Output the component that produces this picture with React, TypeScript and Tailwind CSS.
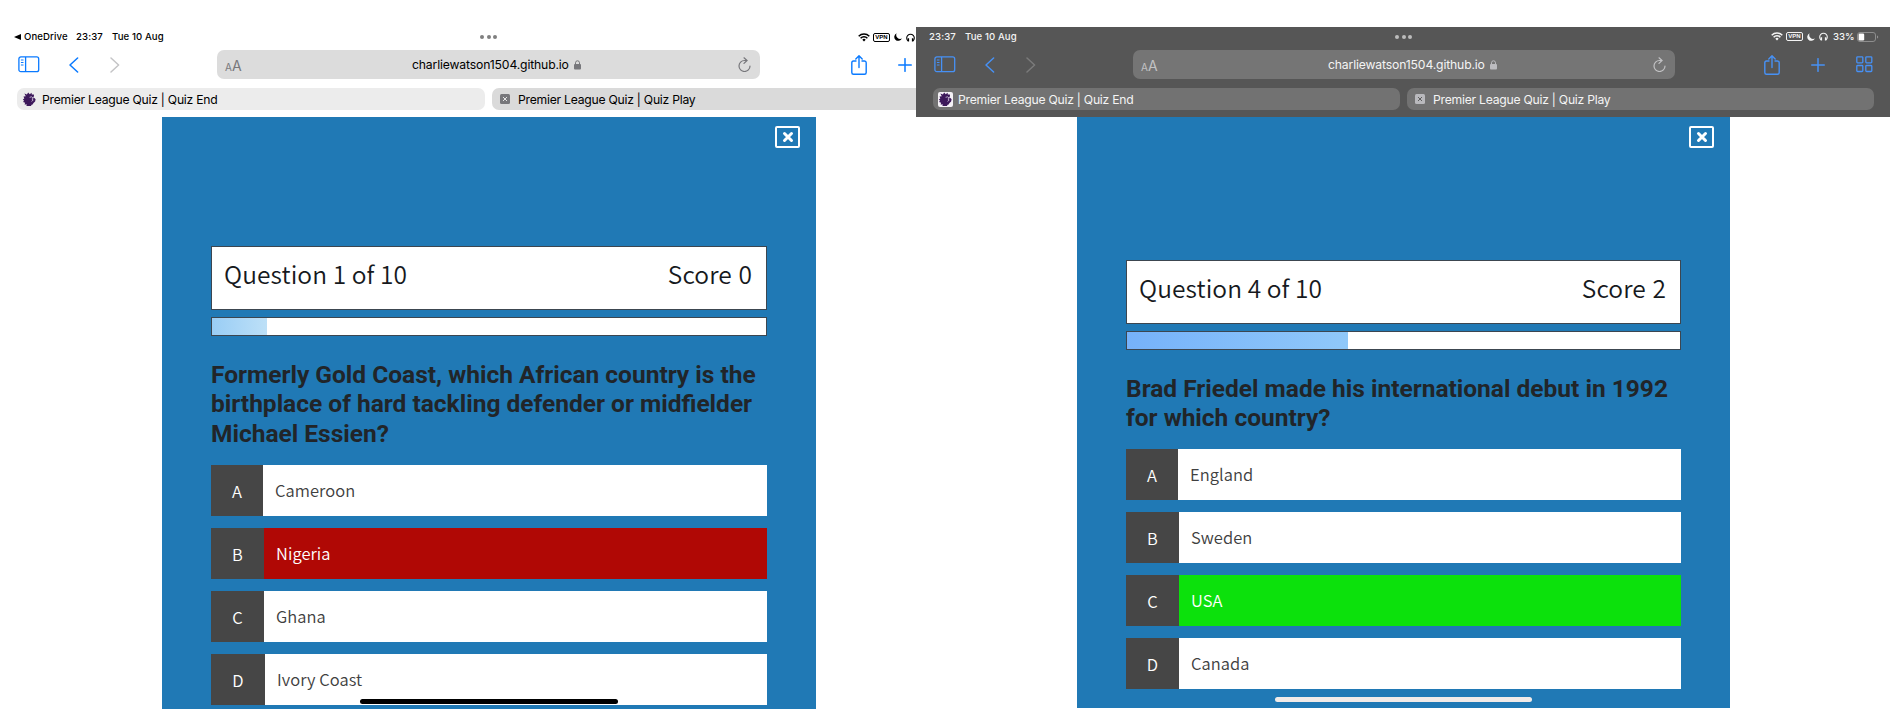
import { ReactNode } from "react";

const UI = "font-['Inter',sans-serif]";
const READ = "font-['Noto_Sans_CJK_SC',sans-serif] font-[350]";

function SidebarIcon() {
  return (
    <svg width="22" height="17" viewBox="0 0 22 17" fill="none" stroke="currentColor" strokeWidth="1.3">
      <rect x="0.9" y="0.9" width="19.8" height="14.8" rx="2" />
      <path d="M7.6 1v14.6" />
      <path d="M2.9 4h2.6M2.9 6.5h2.6M2.9 9h2.6" strokeWidth="1" />
    </svg>
  );
}

function Chevron({ flip = false }: { flip?: boolean }) {
  return (
    <svg width="10" height="16" viewBox="0 0 10 16" fill="none" stroke="currentColor" strokeWidth="1.5" strokeLinecap="round" strokeLinejoin="round">
      <path d={flip ? "M1 1l7.6 7L1 15" : "M8.6 1L1 8l7.6 7"} />
    </svg>
  );
}

function ShareIcon() {
  return (
    <svg width="16" height="20" viewBox="0 0 16 20" fill="none" stroke="currentColor" strokeWidth="1.4" strokeLinecap="round" strokeLinejoin="round">
      <path d="M5 6H2.5Q.8 6 .8 7.8v9.6q0 1.8 1.7 1.8h11q1.7 0 1.7-1.8V7.8Q15.2 6 13.5 6H11" />
      <path d="M8 12.5V1M4.800 4L8 .8 11.2 4" />
    </svg>
  );
}

function PlusIcon() {
  return (
    <svg width="14" height="14" viewBox="0 0 14 14" stroke="currentColor" strokeWidth="1.5" strokeLinecap="round">
      <path d="M7 .7v12.6M.7 7h12.6" />
    </svg>
  );
}

function GridIcon() {
  return (
    <svg width="17" height="17" viewBox="0 0 17 17" fill="none" stroke="currentColor" strokeWidth="1.3">
      <rect x="0.8" y="0.8" width="6" height="6" rx="0.8" />
      <rect x="9.8" y="0.8" width="6" height="6" rx="0.8" />
      <rect x="0.8" y="9.5" width="6" height="6" rx="0.8" />
      <rect x="9.8" y="9.5" width="6" height="6" rx="0.8" />
    </svg>
  );
}

function LockIcon() {
  return (
    <svg width="7" height="10" viewBox="0 0 7 10" fill="none">
      <rect x="0" y="4" width="7" height="5.6" rx="1" fill="currentColor" />
      <path d="M1.500 4.500V2.800a2 2 0 0 1 4 0v1.700" stroke="currentColor" strokeWidth="1" />
    </svg>
  );
}

function ReloadIcon() {
  return (
    <svg width="13" height="15" viewBox="0 0 13 15" fill="none" stroke="currentColor" strokeWidth="1.2" strokeLinecap="round" strokeLinejoin="round">
      <path d="M8.8 3.500H6.500a5.500 5.500 0 1 0 5.500 5.500" />
      <path d="M6 .8l3 2.700-3 2.900" />
    </svg>
  );
}

function WifiIcon() {
  return (
    <svg width="12" height="9" viewBox="0 0 12 9" fill="none" stroke="currentColor" strokeWidth="1.5">
      <path d="M.7 3.200a7.500 7.500 0 0 1 10.600 0M2.600 5.200a4.800 4.800 0 0 1 6.800 0" />
      <path d="M6 8.500L4.300 6.700a2.400 2.400 0 0 1 3.400 0z" fill="currentColor" stroke="none" />
    </svg>
  );
}

function MoonIcon() {
  return (
    <svg width="8" height="8" viewBox="0 0 8 8" fill="currentColor">
      <path d="M2.600.2A4 4 0 1 0 7.900 5.500 4 4 0 0 1 2.600.2z" />
    </svg>
  );
}

function HeadphonesIcon() {
  return (
    <svg width="9" height="9" viewBox="0 0 9 9" fill="none" stroke="currentColor">
      <path d="M1.900 7.800A3.800 3.800 0 1 1 7.100 7.800" strokeWidth="1.1" />
      <path d="M2.400 5.300v3.200M6.600 5.300v3.200" strokeWidth="1.4" />
    </svg>
  );
}

function Lion({ boxed = false }: { boxed?: boolean }) {
  return (
    <svg width="15" height="15" viewBox="0 0 15 15">
      {boxed && <rect width="15" height="15" rx="2" fill="#f4f1f6" />}
      <path
        d="M3.800 4.200L2.400 1.600l2.500.9L6.200.6l1.500 1.600L9.600.8l.2 1.800 2.100-.2.100 2-1.500.8 1.900.8 1.200 1.200-.5 2.300-1.600 1.500-.9 1.500-1.500.4.200 1.200H4.300l.7-1.500-2.400-.2.500-1.600-2-.8.900-1.400L.8 7.600l1.500-1L1.500 4.400z"
        fill="#3d195b"
      />
      <path d="M7.600 5.300l2.200-.5 1.400 1.400-1.300.9 1.300 1-1.700 1.300" fill="none" stroke="#b9a9c9" strokeWidth="1" />
    </svg>
  );
}

function TabClose({ dark }: { dark: boolean }) {
  return (
    <svg width="10" height="10" viewBox="0 0 10 10">
      <rect width="10" height="10" rx="1.500" fill={dark ? "#b9b9bd" : "#77777b"} />
      <path d="M3 3l4 4M7 3L3 7" stroke={dark ? "#5c5c5c" : "#e6e6e6"} strokeWidth="1" />
    </svg>
  );
}

function Battery() {
  return (
    <svg width="22" height="10" viewBox="0 0 22 10" fill="none">
      <rect x="0.5" y="0.5" width="18" height="9" rx="2.500" stroke="#8e8e8e" />
      <rect x="1.600" y="1.600" width="5.600" height="6.800" rx="1.200" fill="#fff" />
      <path d="M20.200 3.500v3q1-.4 1-1.500t-1-1.500z" fill="#a0a0a0" />
    </svg>
  );
}

function Browser({ dark, children }: { dark: boolean; children: ReactNode }) {
  const accent = dark ? "text-[#4791f5]" : "text-[#0a7aff]";
  return (
    <section className={dark ? "flex h-[682px] w-[974px] flex-col" : "flex h-[682px] w-[916px] flex-col overflow-hidden"}>
      <header className={`${UI} h-[90px] shrink-0 ${dark ? "bg-[#565656] text-[#f4f4f4]" : "bg-white text-black"}`}>
        <div className="flex h-5 items-center text-[9.6px] font-medium whitespace-nowrap">
          {dark ? (
            <div className="flex w-[479px] gap-[9px] pl-[13px]">
              <span className="w-[27px] tracking-[0.1px]">23:37</span>
              <span className="tracking-[0.1px]">Tue 10 Aug</span>
            </div>
          ) : (
            <div className="flex w-[480px] items-center pl-[14px]">
              <svg width="7" height="6" viewBox="0 0 7 6"><path d="M7 0v6L0 3z" /></svg>
              <span className="ml-[3px] w-[44px] tracking-[0.1px]">OneDrive</span>
              <span className="ml-[8px] w-[27px] tracking-[0.1px]">23:37</span>
              <span className="ml-[9px] tracking-[0.1px]">Tue 10 Aug</span>
            </div>
          )}
          <div className={`flex gap-[2.5px] ${dark ? "text-[#bcbcbc]" : "text-[#7f7f7f]"}`}>
            <i className="size-[4px] rounded-full bg-current" />
            <i className="size-[4px] rounded-full bg-current" />
            <i className="size-[4px] rounded-full bg-current" />
          </div>
          <div className={`ml-auto flex items-center ${dark ? "pr-[11px]" : "pr-[1px]"}`}>
            <WifiIcon />
            <span className="mr-[4px] ml-[3px] flex h-[9px] w-[17px] items-center justify-center rounded-[2px] border border-current font-['Liberation_Sans',sans-serif] text-[6px] leading-[7px] font-bold">VPN</span>
            <MoonIcon />
            <span className="ml-[4px]"><HeadphonesIcon /></span>
            {dark && (
              <>
                <span className="ml-[5px] w-[24px]">33%</span>
                <Battery />
              </>
            )}
          </div>
        </div>

        <div className={`mt-[3px] flex h-[29px] items-center pl-[18px] ${accent}`}>
          <SidebarIcon />
          <span className="ml-[29px]"><Chevron /></span>
          <span className={`ml-[31px] ${dark ? "text-[#7b7b7b]" : "text-[#c4c4c6]"}`}><Chevron flip /></span>
          <div className={`ml-[97px] flex h-[29px] items-center rounded-[7px] ${dark ? "w-[542px] bg-[#757575] text-[#f4f4f4]" : "w-[543px] bg-[#dcdcdc] text-black"}`}>
            <span className={`w-[195px] pl-[8px] leading-none ${dark ? "text-[#c2c2c4]" : "text-[#77777b]"}`}>
              <span className="text-[10px]">A</span>
              <span className="text-[14px]">A</span>
            </span>
            <span className="w-[162px] pt-[1px] text-[12.2px] tracking-[-0.15px] whitespace-nowrap">charliewatson1504.github.io</span>
            <span className={dark ? "text-[#bcbcc0]" : "text-[#77777b]"}><LockIcon /></span>
            <span className={`mr-[9px] ml-auto ${dark ? "text-[#c2c2c4]" : "text-[#77777b]"}`}><ReloadIcon /></span>
          </div>
          <span className={dark ? "ml-[89px]" : "ml-[91px]"}><ShareIcon /></span>
          <span className="ml-[31px]"><PlusIcon /></span>
          {dark && <span className="ml-[31px]"><GridIcon /></span>}
        </div>

        <div className="mt-[9px] flex h-[22px] gap-[7px] pl-[17px] text-[12.2px] tracking-[-0.25px] whitespace-nowrap">
          <div className={`flex shrink-0 items-center rounded-[7px] pl-[5px] ${dark ? "w-[467px] bg-[#727272]" : "w-[468px] bg-[#ececec]"}`}>
            <Lion boxed={dark} />
            <span className="ml-[5px] pt-[2px]">Premier League Quiz | Quiz End</span>
          </div>
          <div className={`flex shrink-0 items-center rounded-[7px] pl-[8px] ${dark ? "w-[467px] bg-[#727272]" : "w-[468px] bg-[#dadada]"}`}>
            <TabClose dark={dark} />
            <span className="ml-[8px] pt-[2px]">Premier League Quiz | Quiz Play</span>
          </div>
        </div>
      </header>
      {children}
    </section>
  );
}

type Option = { letter: string; label: string; prefix: string; tone: string };

function OptionRow({ letter, label, prefix, tone }: Option) {
  return (
    <li className={`${READ} flex h-[51px] items-center text-[16.5px]`}>
      <span className={`flex h-full items-center justify-center bg-[#464646] pt-[2px] text-white ${prefix}`}>{letter}</span>
      <span className={`flex h-full flex-1 items-center pl-[12px] tracking-[0.05px] ${tone}`}>{label}</span>
    </li>
  );
}

function CloseButton() {
  return (
    <button className="flex h-[22px] w-[25px] items-center justify-center rounded-[2px] border-[2px] border-white" aria-label="Close">
      <svg width="12" height="12" viewBox="0 0 12 12" stroke="#fff" strokeWidth="3" strokeLinecap="round">
        <path d="M2.500 2.500l7 7M9.500 2.500l-7 7" />
      </svg>
    </button>
  );
}

function Hud({ question, score, fill }: { question: string; score: string; fill: string }) {
  return (
    <>
      <div className={`${READ} flex h-[64px] justify-between border border-[#3c4650] bg-white pr-[14px] pl-[12px] text-[24.5px] leading-[53px] tracking-[0.1px] text-[#16191d]`}>
        <span>{question}</span>
        <span className="[word-spacing:1px]">{score}</span>
      </div>
      <div className="mt-[7px] h-[19px] border border-[#3c4650] bg-white">
        <div className={`h-full ${fill}`} />
      </div>
    </>
  );
}

const plain = "bg-white text-[#404040]";

const first: Option[] = [
  { letter: "A", label: "Cameroon", prefix: "w-[52px]", tone: plain },
  { letter: "B", label: "Nigeria", prefix: "w-[53px]", tone: "bg-[#b00805] text-white" },
  { letter: "C", label: "Ghana", prefix: "w-[53px]", tone: plain },
  { letter: "D", label: "Ivory Coast", prefix: "w-[54px]", tone: plain },
];

const second: Option[] = [
  { letter: "A", label: "England", prefix: "w-[52px]", tone: plain },
  { letter: "B", label: "Sweden", prefix: "w-[53px]", tone: plain },
  { letter: "C", label: "USA", prefix: "w-[53px]", tone: "bg-[#0ce10c] text-white" },
  { letter: "D", label: "Canada", prefix: "w-[53px]", tone: plain },
];

export default function App() {
  return (
    <div className="flex h-[709px] w-[1890px] overflow-hidden bg-white pt-[27px]">
      <Browser dark={false}>
        <main className="relative ml-[162px] h-[592px] w-[654px] bg-[#2079b5] pr-[49px] pl-[49px]">
          <div className="-mr-[33px] flex justify-end pt-[9px]"><CloseButton /></div>
          <div className="mt-[98px]">
            <Hud question="Question 1 of 10" score="Score 0" fill="w-[55px] bg-linear-to-r from-[#99cdf5] to-[#bde0f7]" />
          </div>
          <h2 className="mt-[24px] h-[88px] font-['Roboto',sans-serif] text-[24.5px] leading-[29.3px] font-bold whitespace-nowrap text-[#212529]">
            Formerly Gold Coast, which African country is the<br />
            birthplace of hard tackling defender or midfielder<br />
            Michael Essien?
          </h2>
          <ul className="mt-[17px] flex flex-col gap-[12px]">
            {first.map((o) => <OptionRow key={o.letter} {...o} />)}
          </ul>
          <div className="absolute top-[582px] left-[198px] h-[5px] w-[258px] rounded-full bg-black" />
        </main>
      </Browser>
      <Browser dark>
        <main className="relative ml-[161px] h-[591px] w-[653px] bg-[#2079b5] pr-[49px] pl-[49px]">
          <div className="-mr-[33px] flex justify-end pt-[9px]"><CloseButton /></div>
          <div className="mt-[112px]">
            <Hud question="Question 4 of 10" score="Score 2" fill="w-[221px] bg-linear-to-r from-[#76b2fa] to-[#90c8f9]" />
          </div>
          <h2 className="mt-[24px] h-[59px] font-['Roboto',sans-serif] text-[24.5px] leading-[29.3px] font-bold whitespace-nowrap text-[#212529]">
            Brad Friedel made his international debut in 1992<br />
            for which country?
          </h2>
          <ul className="mt-[16px] flex flex-col gap-[12px]">
            {second.map((o) => <OptionRow key={o.letter} {...o} />)}
          </ul>
          <div className="absolute top-[580px] left-[198px] h-[5px] w-[257px] rounded-full bg-[#f1ebe8]" />
        </main>
      </Browser>
    </div>
  );
}
